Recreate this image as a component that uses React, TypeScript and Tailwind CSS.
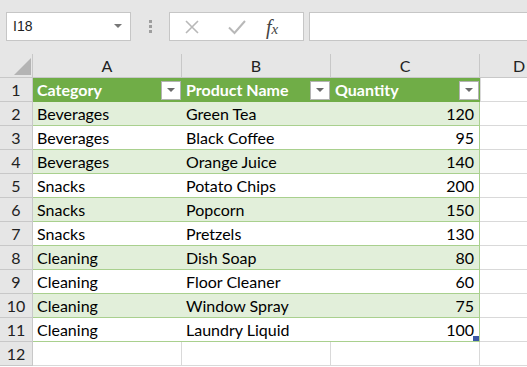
import React from 'react';

const rows: [string, string, number][] = [
  ['Beverages', 'Green Tea', 120],
  ['Beverages', 'Black Coffee', 95],
  ['Beverages', 'Orange Juice', 140],
  ['Snacks', 'Potato Chips', 200],
  ['Snacks', 'Popcorn', 150],
  ['Snacks', 'Pretzels', 130],
  ['Cleaning', 'Dish Soap', 80],
  ['Cleaning', 'Floor Cleaner', 60],
  ['Cleaning', 'Window Spray', 75],
  ['Cleaning', 'Laundry Liquid', 100],
];

const FilterButton: React.FC = () => (
  <div className="absolute right-0 top-[3px] w-[20px] h-[19px] bg-white border border-[#b3b3b3] flex items-center justify-center">
    <svg width="8" height="5" viewBox="0 0 8 5">
      <path d="M0 0 L8 0 L4 4 Z" fill="#6b6b6b" />
    </svg>
  </div>
);

const RowHead: React.FC<{ n: number }> = ({ n }) => (
  <div className="w-[33px] h-[24px] shrink-0 bg-[#e6e6e6] border-r border-b border-[#c8c8c8] flex items-center justify-center text-[16px] text-[#222]">
    {n}
  </div>
);

const App: React.FC = () => {
  return (
    <div className="w-[527px] h-[367px] overflow-hidden bg-white font-['Lato','Liberation_Sans',sans-serif] text-[16px] text-black">
      {/* formula bar */}
      <div className="h-[54px] bg-[#e6e6e6] flex items-start pt-[12px] pl-[6px]">
        <div className="w-[125px] h-[29px] bg-white border border-[#c6c6c6] flex items-center justify-between pl-[6px] pr-[8px]">
          <span className="text-[14px] text-[#222] font-['Liberation_Sans',sans-serif]">I18</span>
          <svg width="8" height="5" viewBox="0 0 8 5">
            <path d="M0 0 L8 0 L4 4 Z" fill="#777" />
          </svg>
        </div>
        <div className="w-[38px] h-[29px] flex flex-col items-center justify-center gap-[2px]">
          <div className="w-[3px] h-[3px] bg-[#9e9e9e]" />
          <div className="w-[3px] h-[3px] bg-[#9e9e9e]" />
          <div className="w-[3px] h-[3px] bg-[#9e9e9e]" />
        </div>
        <div className="w-[135px] h-[29px] bg-white border border-[#c6c6c6] flex items-center">
          <svg width="16" height="16" viewBox="0 0 16 16" className="ml-[14px]">
            <path d="M2 2 L14 14 M14 2 L2 14" stroke="#b8b8b8" strokeWidth="1.6" />
          </svg>
          <svg width="18" height="16" viewBox="0 0 18 16" className="ml-[28px]">
            <path d="M1 8.5 L6.5 14 L17 2" stroke="#b8b8b8" strokeWidth="2" fill="none" />
          </svg>
          <span className="ml-[20px] text-[20px] italic text-[#444] font-['Liberation_Serif',serif] leading-none">
            f<span className="text-[15px]">x</span>
          </span>
        </div>
        <div className="ml-[5px] flex-1 h-[29px] bg-white border border-[#c6c6c6] border-r-0" />
      </div>

      {/* column headers */}
      <div className="flex h-[24px]">
        <div className="w-[33px] shrink-0 bg-[#e6e6e6] border-r border-b border-[#c8c8c8] relative">
          <svg width="17" height="17" viewBox="0 0 17 17" className="absolute left-[14px] top-[4px]">
            <path d="M17 0 L17 17 L0 17 Z" fill="#b4b4b4" />
          </svg>
        </div>
        {['A', 'B', 'C'].map((c) => (
          <div key={c} className="w-[149px] shrink-0 bg-[#e6e6e6] border-r border-b border-[#c8c8c8] flex items-center justify-center text-[16px] text-[#222]">
            {c}
          </div>
        ))}
        <div className="flex-1 bg-[#e6e6e6] border-b border-[#c8c8c8] pl-[33px] flex items-center text-[16px] text-[#222]">
          D
        </div>
      </div>

      {/* table header row */}
      <div className="flex">
        <RowHead n={1} />
        {['Category', 'Product Name', 'Quantity'].map((h) => (
          <div key={h} className="relative w-[149px] h-[24px] shrink-0 bg-[#70ad47] border-r border-[#70ad47] text-white font-bold pl-[4px] flex items-center">
            {h}
            <FilterButton />
          </div>
        ))}
        <div className="flex-1 h-[24px] border-b border-[#d9d9d9] border-l border-l-[#d9d9d9]" />
      </div>

      {rows.map(([cat, name, qty], i) => {
        const band = i % 2 === 0;
        const bg = band ? 'bg-[#e2efda]' : 'bg-white';
        return (
          <div key={i} className="flex">
            <RowHead n={i + 2} />
            <div className={`w-[149px] h-[24px] shrink-0 ${bg} border-b border-[#a9d08e] pl-[4px] flex items-center`}>{cat}</div>
            <div className={`w-[149px] h-[24px] shrink-0 ${bg} border-b border-[#a9d08e] pl-[4px] flex items-center`}>{name}</div>
            <div className={`relative w-[149px] h-[24px] shrink-0 ${bg} border-b border-r border-[#a9d08e] pr-[5px] flex items-center justify-end`}>
              {qty}
              {i === rows.length - 1 && (
                <div className="absolute right-0 bottom-0 z-10 w-[6px] h-[5px] bg-[#3b57a6]" />
              )}
            </div>
            <div className="flex-1 h-[24px] border-b border-[#d9d9d9]" />
          </div>
        );
      })}

      <div className="flex">
        <RowHead n={12} />
        <div className="w-[149px] h-[24px] shrink-0 border-r border-b border-[#d9d9d9]" />
        <div className="w-[149px] h-[24px] shrink-0 border-r border-b border-[#d9d9d9]" />
        <div className="w-[149px] h-[24px] shrink-0 border-r border-b border-[#d9d9d9]" />
        <div className="flex-1 h-[24px] border-b border-[#d9d9d9]" />
      </div>
    </div>
  );
};

export default App;
